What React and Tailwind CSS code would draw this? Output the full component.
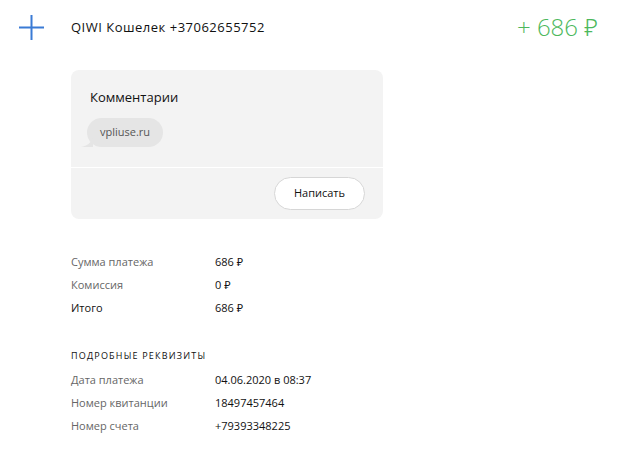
export default function App() {
  const font = { fontFamily: '"Open Sans", "Noto Sans", sans-serif' }
  return (
    <div className="w-[625px] h-[459px] bg-white text-[#111]" style={font}>
      {/* Header */}
      <div className="flex items-center h-[54px] pl-[19px] pr-[27px]">
        <svg width="25" height="25" viewBox="0 0 25 25" className="shrink-0 mt-[1px]">
          <path d="M12.5 0V25M0 12.5H25" stroke="#3a7bd5" strokeWidth="2" />
        </svg>
        <div className="ml-[27px] pt-[2px] text-[13px] tracking-[0.5px]">QIWI Кошелек +37062655752</div>
        <div className="ml-auto text-[24px] text-[#4cb85c] font-light">+ 686 ₽</div>
      </div>

      {/* Comments card */}
      <div className="ml-[71px] mt-[16px] w-[312px] bg-[#f3f3f3] rounded-[8px] overflow-hidden">
        <div className="px-[19px] pt-[18px] pb-[20px]">
          <div className="text-[13px]">Комментарии</div>
          <div className="relative mt-[10px] inline-flex items-center h-[29px] px-[13px] bg-[#e5e5e5] rounded-[15px] text-[11px] text-[#555] ml-[-3px]">
            <svg width="12" height="10" viewBox="0 0 12 10" className="absolute left-[-6px] bottom-0">
              <path d="M12 0 C10 6 6 9 0 10 L12 10 Z" fill="#e5e5e5" />
            </svg>
            vpliuse.ru
          </div>
        </div>
        <div className="h-px bg-white" />
        <div className="flex justify-end px-[18px] py-[9px]">
          <button className="h-[33px] px-[19px] bg-white border border-[#d6d6d6] rounded-full text-[11px]">
            Написать
          </button>
        </div>
      </div>

      {/* Totals */}
      <div className="ml-[71px] mt-[32px] text-[11px]">
        <div className="flex h-[23px] items-center">
          <div className="w-[144px] text-[#666]">Сумма платежа</div>
          <div>686 ₽</div>
        </div>
        <div className="flex h-[23px] items-center">
          <div className="w-[144px] text-[#666]">Комиссия</div>
          <div>0 ₽</div>
        </div>
        <div className="flex h-[23px] items-center">
          <div className="w-[144px]">Итого</div>
          <div>686 ₽</div>
        </div>
      </div>

      {/* Details */}
      <div className="ml-[71px] mt-[24px] text-[11px]">
        <div className="h-[25px] flex items-center text-[9px] tracking-[1.2px] uppercase">Подробные реквизиты</div>
        <div className="flex h-[23px] items-center">
          <div className="w-[144px] text-[#666]">Дата платежа</div>
          <div>04.06.2020 в 08:37</div>
        </div>
        <div className="flex h-[23px] items-center">
          <div className="w-[144px] text-[#666]">Номер квитанции</div>
          <div>18497457464</div>
        </div>
        <div className="flex h-[23px] items-center">
          <div className="w-[144px] text-[#666]">Номер счета</div>
          <div>+79393348225</div>
        </div>
      </div>
    </div>
  )
}
